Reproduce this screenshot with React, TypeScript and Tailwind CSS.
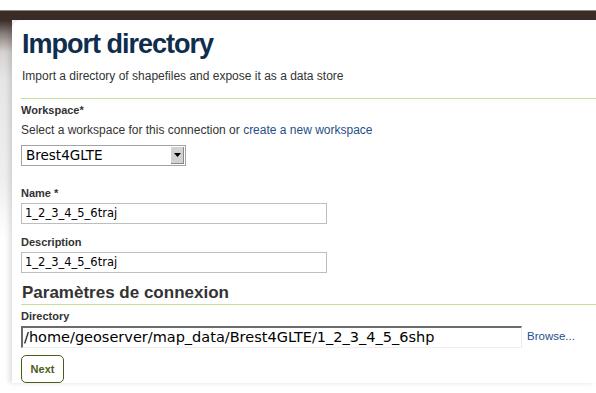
export default function App() {
  return (
    <div className="w-[596px] h-[393px] overflow-hidden bg-white font-['Liberation_Sans',Arial,sans-serif] text-[#333]">
      {/* top bar */}
      <div className="h-[10px] bg-white" />
      <div className="h-[1px] bg-[#8d827d]" />
      <div className="h-[9px] bg-[#3a2c27]" />

      <div className="flex">
        <div className="w-[12px] h-[220px] bg-[linear-gradient(to_bottom,#3a2c27_0px,#8a807b_14px,#d6d2d0_32px,#e6e6e6_60px,#efefef_160px,#ffffff_220px)]" />
        <div className="flex-1 bg-white rounded-tl-[9px] shadow-[-3px_0_5px_rgba(0,0,0,0.12)] pl-[9px] pt-[8px]">
          <h1 className="text-[27px] leading-[32px] font-bold tracking-[-1px] text-[#0f2d4c] pl-[1px]">Import directory</h1>
          <p className="text-[12px] leading-[14px] mt-[9px] pl-[1px]">
            Import a directory of shapefiles and expose it as a data store
          </p>
          <div className="h-[1px] bg-[#c4e09a] mt-[15px]" />

          <div className="mt-[5px] text-[11px] font-bold leading-[13px]">Workspace*</div>
          <p className="text-[12px] leading-[14px] mt-[6px]">
            Select a workspace for this connection or{" "}
            <span className="text-[#1f4f87]">create a new workspace</span>
          </p>
          <div className="mt-[8px] w-[165px] h-[21px] border border-[#a3a3a3] flex items-center bg-white">
            <span className="flex-1 pl-[4px] font-['DejaVu_Sans',sans-serif] text-[13.5px] text-black">Brest4GLTE</span>
            <div className="w-[13px] h-[17px] mr-[1px] bg-[#d4d2d0] border-r border-b border-[#888] flex items-center justify-center">
              <svg width="7" height="4" viewBox="0 0 7 4"><path d="M0 0h7L3.5 4z" fill="#000" /></svg>
            </div>
          </div>

          <div className="mt-[21px] text-[11px] font-bold leading-[13px]">Name *</div>
          <div className="mt-[3px] w-[306px] h-[21px] border border-[#bdbdbd] flex items-center pl-[3px] font-['DejaVu_Sans',sans-serif] text-[11.5px] text-black">
            1_2_3_4_5_6traj
          </div>

          <div className="mt-[12px] text-[11px] font-bold leading-[13px]">Description</div>
          <div className="mt-[3px] w-[306px] h-[21px] border border-[#bdbdbd] flex items-center pl-[3px] font-['DejaVu_Sans',sans-serif] text-[11.5px] text-black">
            1_2_3_4_5_6traj
          </div>

          <div className="mt-[10px] text-[17px] font-bold leading-[20px] pl-[1px]">Paramètres de connexion</div>
          <div className="h-[1px] bg-[#c4e09a] mt-[1px]" />

          <div className="mt-[5px] text-[11px] font-bold leading-[13px]">Directory</div>
          <div className="mt-[3px] flex items-center">
            <div className="w-[501px] h-[22px] border-t-2 border-l-2 border-[#6b6b6b] border-r border-b border-r-[#eee] border-b-[#eee] flex items-center pl-[1px] font-['DejaVu_Sans',sans-serif] text-[14.5px] text-black">
              /home/geoserver/map_data/Brest4GLTE/1_2_3_4_5_6shp
            </div>
            <span className="ml-[5px] text-[11.5px] text-[#1f4f87]">Browse...</span>
          </div>

          <button className="mt-[7px] w-[43px] h-[28px] rounded-[5px] border border-[#4c5d1a] text-[#4c5d1a] text-[11px] font-bold bg-white">
            Next
          </button>
        </div>
      </div>
    </div>
  );
}
